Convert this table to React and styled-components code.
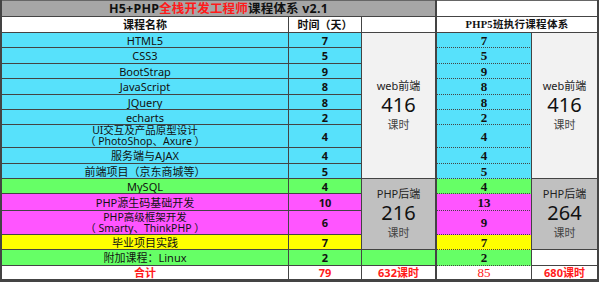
import React from 'react'
import styled, { createGlobalStyle } from 'styled-components'

const CYAN = '#57e1fb'
const GREEN = '#66ff66'
const PINK = '#ff55ff'
const YELLOW = '#ffff00'
const LINE = '#444'
const RED = '#ff1a1a'

const GlobalStyle = createGlobalStyle`
  html, body {
    margin: 0;
    padding: 0;
    background: #fff;
  }
  body {
    font-family: "Noto Sans", "Noto Sans CJK SC", sans-serif;
    color: #111;
  }
`

const ROWS = '17px 16px 15px 16px 15px 16px 15px 15px 23px 16px 15px 15px 17px 24px 15px 16px 14px'

const Sheet = styled.div`
  display: flex;
  width: 599px;
  height: 282px;
`

const Table = styled.div`
  display: grid;
  grid-template-columns: ${p => p.$cols};
  grid-template-rows: ${ROWS};
  border-left: ${p => (p.$left ? `2px solid ${LINE}` : 'none')};
  border-right: 2px solid ${LINE};
  border-bottom: 2px solid ${LINE};
`

const Cell = styled.div`
  box-sizing: border-box;
  display: flex;
  align-items: center;
  justify-content: center;
  text-align: center;
  overflow: hidden;
  white-space: nowrap;
  font-size: 11px;
  line-height: 13px;
  background: ${p => p.$bg || '#fff'};
  grid-column: ${p => p.$col || 'auto'};
  grid-row: ${p => p.$row || 'auto'};
  border-bottom: 1px ${p => (p.$dotted ? 'dotted' : 'solid')} ${LINE};
  border-right: ${p => (p.$last ? 'none' : `1px solid ${LINE}`)};
  font-weight: ${p => (p.$bold ? 700 : 400)};
`

const Title = styled(Cell)`
  border-top: 1px solid #666;
  font-size: 12.5px;
  font-weight: 700;
  letter-spacing: 0.2px;
`

const Red = styled.span`
  color: ${RED};
`

// two-line course name: the reference crops the second line slightly
const Two = styled(Cell)`
  flex-direction: column;
  justify-content: center;
  line-height: 11px;
  font-size: 10.5px;
`

const Num = styled(Cell)`
  font-weight: 700;
`

const SerifNum = styled(Cell)`
  font-family: "Liberation Serif", "Noto Sans CJK SC", serif;
  font-size: 13px;
  font-weight: 700;
`

const SerifHead = styled(Cell)`
  font-family: "Liberation Serif", "Noto Sans CJK SC", serif;
  font-size: 10.5px;
  font-weight: 700;
  letter-spacing: 0.3px;
`

const Block = styled(Cell)`
  flex-direction: column;
  color: #222;
`

const BlockLabel = styled.div`
  font-size: 11px;
  line-height: 14px;
`

const BlockHours = styled.div`
  font-size: 20px;
  line-height: 24px;
  color: #111;
`

const BlockUnit = styled.div`
  font-size: 11px;
  line-height: 16px;
  color: #444;
`

const Total = styled(Cell)`
  color: ${RED};
  font-weight: 700;
`

const SerifTotal = styled(Cell)`
  color: ${RED};
  font-family: "Liberation Serif", serif;
  font-size: 13px;
`

const courses = [
  { name: 'HTML5', days: 7, php5: 7, bg: CYAN },
  { name: 'CSS3', days: 5, php5: 5, bg: CYAN },
  { name: 'BootStrap', days: 9, php5: 9, bg: CYAN },
  { name: 'JavaScript', days: 8, php5: 8, bg: CYAN },
  { name: 'JQuery', days: 8, php5: 8, bg: CYAN },
  { name: 'echarts', days: 2, php5: 2, bg: CYAN },
  { name: ['UI交互及产品原型设计', '（ PhotoShop、Axure ）'], days: 4, php5: 4, bg: CYAN },
  { name: '服务端与AJAX', days: 4, php5: 4, bg: CYAN },
  { name: '前端项目（京东商城等）', days: 5, php5: 5, bg: CYAN },
  { name: 'MySQL', days: 4, php5: 4, bg: GREEN },
  { name: 'PHP源生码基础开发', days: 10, php5: 13, bg: PINK },
  { name: ['PHP高级框架开发', '（ Smarty、ThinkPHP ）'], days: 6, php5: 9, bg: PINK },
  { name: '毕业项目实践', days: 7, php5: 7, bg: YELLOW },
  { name: '附加课程：Linux', days: 2, php5: 2, bg: GREEN },
]

const HoursBlock = ({ label, hours, ...props }) => (
  <Block {...props}>
    <BlockLabel>{label}</BlockLabel>
    <BlockHours>{hours}</BlockHours>
    <BlockUnit>课时</BlockUnit>
  </Block>
)

export default function App() {
  return (
    <>
      <GlobalStyle />
      <Sheet>
        <Table $left $cols="287px 73px 73px">
          <Title $col="1 / -1" $bg="#a6a6a6" $last>
            H5+PHP<Red>全栈开发工程师</Red>课程体系 v2.1
          </Title>
          <Cell $bold>课程名称</Cell>
          <Cell $bold>时间（天）</Cell>
          <Cell $last />
          {courses.map((c, i) => (
            <React.Fragment key={i}>
              {Array.isArray(c.name) ? (
                <Two $bg={c.bg} $row={i + 3} $col={1}>
                  <span>{c.name[0]}</span>
                  <span>{c.name[1]}</span>
                </Two>
              ) : (
                <Cell $bg={c.bg} $row={i + 3} $col={1}>{c.name}</Cell>
              )}
              <Num $bg={c.bg} $row={i + 3} $col={2}>{c.days}</Num>
            </React.Fragment>
          ))}
          <HoursBlock $col={3} $row="3 / 12" $bg="#f2f2f2" $last label="web前端" hours="416" />
          <HoursBlock $col={3} $row="12 / 16" $bg="#c0c0c0" $last label="PHP后端" hours="216" />
          <Cell $col={3} $row={16} $bg={GREEN} $last />
          <Total $col={1} $row={17}>合计</Total>
          <Total $col={2} $row={17}>79</Total>
          <Total $col={3} $row={17} $last>632课时</Total>
        </Table>
        <Table $cols="95px 65px">
          <Title $col="1 / -1" $last />
          <SerifHead $col="1 / -1" $last>PHP5班执行课程体系</SerifHead>
          {courses.map((c, i) => (
            <SerifNum key={i} $bg={c.bg} $row={i + 3} $col={1} $dotted>{c.php5}</SerifNum>
          ))}
          <HoursBlock $col={2} $row="3 / 12" $bg="#f2f2f2" $last label="web前端" hours="416" />
          <HoursBlock $col={2} $row="12 / 16" $bg="#c0c0c0" $last label="PHP后端" hours="264" />
          <Cell $col={2} $row={16} $last />
          <SerifTotal $col={1} $row={17}>85</SerifTotal>
          <Total $col={2} $row={17} $last>680课时</Total>
        </Table>
      </Sheet>
    </>
  )
}
